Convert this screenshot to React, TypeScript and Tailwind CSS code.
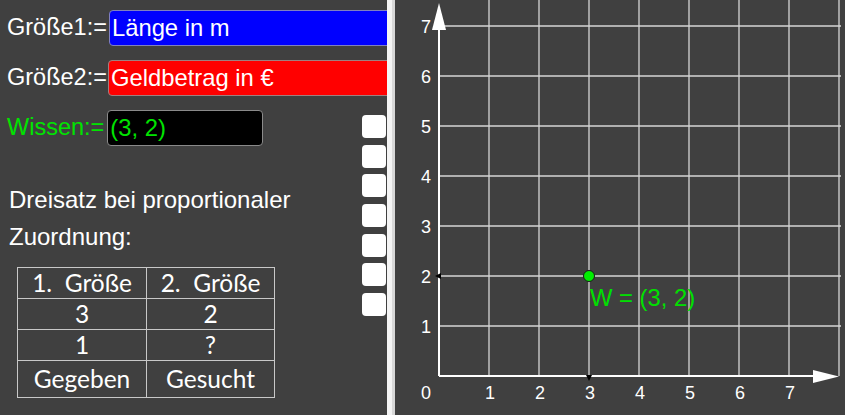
import React from "react";

const SANS = { fontFamily: '"Liberation Sans", Arial, sans-serif' };
const TEX = { fontFamily: 'Lato, "DejaVu Sans", sans-serif' };

function InputRow({ label, value, box, labelColor, valueColor, width }: { label: string; value: string; box: string; labelColor: string; valueColor: string; width: string }) {
  return (
    <div className="flex items-center h-[36px]">
      <span className={`${labelColor} text-[23.5px] leading-none whitespace-nowrap`}>{label}</span>
      <div className={`${box} ${width} h-[36px] shrink-0 rounded-[4px] border flex items-center pl-[2px]`}>
        <span className={`${valueColor} text-[23.8px] leading-none whitespace-nowrap`}>{value}</span>
      </div>
    </div>
  );
}

function Table() {
  const rows = [
    ["1.  Größe", "2.  Größe"],
    ["3", "2"],
    ["1", "?"],
    ["Gegeben", "Gesucht"],
  ];
  const heights = ["h-[31px]", "h-[31px]", "h-[31px]", "h-[37px]"];
  return (
    <table className="border-collapse text-white text-[24.5px]" style={TEX}>
      <tbody>
        {rows.map((r, i) => (
          <tr key={i} className={heights[i]}>
            {r.map((c, j) => (
              <td key={j} className={`border-[1.5px] border-[#c8c8c8] text-center p-0 leading-none whitespace-pre font-normal ${j === 0 ? "w-[129px]" : "w-[128px]"}`}>
                {c}
              </td>
            ))}
          </tr>
        ))}
      </tbody>
    </table>
  );
}

function Graph() {
  const ox = 44;
  const oy = 376;
  const u = 50;
  const xs = [1, 2, 3, 4, 5, 6, 7, 8];
  const ys = [1, 2, 3, 4, 5, 6, 7];
  return (
    <svg width="450" height="415" className="block" style={SANS}>
      {xs.map((k) => (
        <line key={"v" + k} x1={ox + k * u} y1={0} x2={ox + k * u} y2={oy} stroke="#d6d6d6" strokeWidth="1.3" />
      ))}
      {ys.map((k) => (
        <line key={"h" + k} x1={ox} y1={oy - k * u} x2={446} y2={oy - k * u} stroke="#d6d6d6" strokeWidth="1.3" />
      ))}
      <line x1={ox} y1={oy} x2={ox} y2={20} stroke="#ffffff" strokeWidth="2" />
      <line x1={ox} y1={oy} x2={430} y2={oy} stroke="#ffffff" strokeWidth="2" />
      <polygon points="44,3 37,30 51,30" fill="#ffffff" />
      <polygon points="444,376.5 418,370 418,383" fill="#ffffff" />
      {ys.map((k) => (
        <text key={"yl" + k} x={31} y={oy - k * u + 6.5} fill="#ffffff" fontSize="18" textAnchor="middle">
          {k}
        </text>
      ))}
      <text x={31} y={398.5} fill="#ffffff" fontSize="18" textAnchor="middle">0</text>
      {[1, 2, 3, 4, 5, 6, 7].map((k) => (
        <text key={"xl" + k} x={ox + k * u + 1} y={398.5} fill="#ffffff" fontSize="18" textAnchor="middle">
          {k}
        </text>
      ))}
      <polygon points="40,276 46,273 46,279" fill="#000000" />
      <polygon points="191,375 197,375 194,381" fill="#000000" />
      <circle cx={194} cy={276} r={5.5} fill="#00ee00" stroke="#1a1a1a" strokeWidth="1" />
      <text x={195} y={306} fill="#00e000" fontSize="23.8">W = (3, 2)</text>
    </svg>
  );
}

export default function App() {
  return (
    <div className="flex w-[845px] h-[415px] bg-[#404040] overflow-hidden" style={SANS}>
      <div className="w-[387px] h-full overflow-hidden flex flex-col pt-[10px] pl-[7px]">
        <div className="flex flex-col gap-[14px]">
          <InputRow label="Größe1:=" value="Länge in m" box="bg-[#0000ff] border-[#8080c0] ml-[2px]" labelColor="text-white" valueColor="text-white" width="w-[300px]" />
          <InputRow label="Größe2:=" value="Geldbetrag in €" box="bg-[#ff0000] border-[#a08080] ml-[1px]" labelColor="text-white" valueColor="text-white" width="w-[300px]" />
        </div>
        <div className="flex mt-[14px]">
          <div className="flex-1 flex flex-col">
            <InputRow label="Wissen:=" value="(3, 2)" box="bg-black border-[#8a8a8a] ml-[3px]" labelColor="text-[#00e400]" valueColor="text-[#00e400]" width="w-[156px]" />
            <div className="mt-[35px] text-white text-[24px] leading-[37px] pl-[2px]">
              <div>Dreisatz bei proportionaler</div>
              <div>Zuordnung:</div>
            </div>
            <div className="mt-[12px] ml-[10px]">
              <Table />
            </div>
          </div>
          <div className="flex flex-col gap-[6.7px] pt-[5px] w-[25px] shrink-0">
            {[0, 1, 2, 3, 4, 5, 6].map((i) => (
              <div key={i} className="w-[24px] h-[23px] bg-white rounded-[4px]" />
            ))}
          </div>
        </div>
      </div>
      <div className="w-[5px] h-full bg-[#f4f4f4]" />
      <div className="w-[3px] h-full bg-[#d8d8d8]" />
      <div className="w-[450px] h-full">
        <Graph />
      </div>
    </div>
  );
}
